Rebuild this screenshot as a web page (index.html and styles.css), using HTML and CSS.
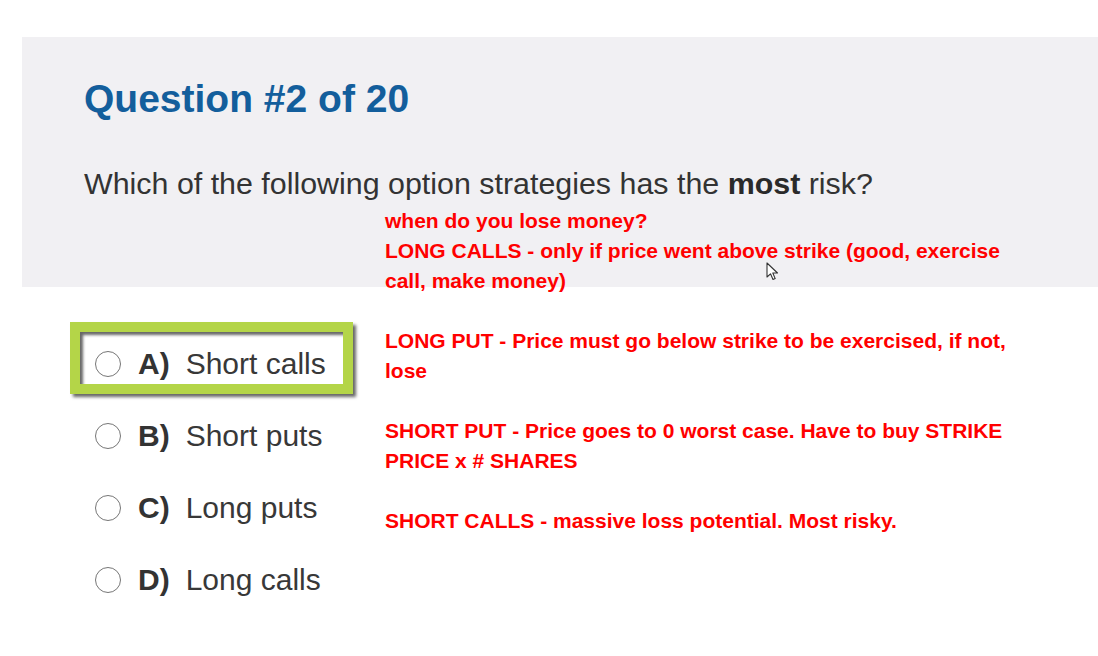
FILE: index.html
```html
<!DOCTYPE html>
<html>
<head>
<meta charset="utf-8">
<link rel="stylesheet" href="styles.css">
</head>
<body>
<div class="page">
  <section class="panel">
    <h1 class="title">Question #2 of 20</h1>
    <p class="question">Which of the following option strategies has the <b>most</b> risk?</p>
  </section>

  <ul class="options">
    <li class="option highlight"><span class="radio"></span><span class="letter">A)</span><span class="text">Short calls</span></li>
    <li class="option"><span class="radio"></span><span class="letter">B)</span><span class="text">Short puts</span></li>
    <li class="option"><span class="radio"></span><span class="letter">C)</span><span class="text">Long puts</span></li>
    <li class="option"><span class="radio"></span><span class="letter">D)</span><span class="text">Long calls</span></li>
  </ul>

  <div class="notes">
    <p>when do you lose money?<br>LONG CALLS - only if price went above strike (good, exercise call, make money)</p>
    <p>LONG PUT - Price must go below strike to be exercised, if not, lose</p>
    <p>SHORT PUT - Price goes to 0 worst case. Have to buy STRIKE PRICE x # SHARES</p>
    <p>SHORT CALLS - massive loss potential. Most risky.</p>
  </div>

  <svg class="cursor" width="13" height="20" viewBox="0 0 13 20">
    <path d="M1 1 L1 15 L4.5 11.8 L7 17.5 L9.2 16.6 L6.8 11 L11.5 11 Z" fill="#fff" stroke="#333" stroke-width="1.1" stroke-linejoin="round"/>
  </svg>
</div>
</body>
</html>
```

FILE: styles.css
```css
* { box-sizing: border-box; }
html, body { margin: 0; padding: 0; background: #ffffff; }
body { font-family: "Liberation Sans", Arial, sans-serif; }

.page {
  position: relative;
  width: 1098px;
  height: 656px;
  overflow: hidden;
}

.panel {
  margin: 37px 0 0 22px;
  height: 250px;
  background: #f1f0f3;
  padding: 40px 0 0 62px;
}

.title {
  margin: 0;
  font-size: 39px;
  line-height: 44px;
  font-weight: bold;
  color: #135e9c;
}

.question {
  margin: 44px 0 0 0;
  font-size: 30.4px;
  line-height: 36px;
  color: #333333;
}
.question b { color: #2a2a2a; }

.options {
  list-style: none;
  margin: 35px 0 0 70px;
  padding: 0;
  display: flex;
  flex-direction: column;
  align-items: flex-start;
}

.option {
  display: flex;
  align-items: center;
  height: 72px;
  border: 10px solid transparent;
  padding: 12px 17px 0 15px;
  font-size: 30px;
  color: #383838;
}
.option > * { line-height: 40px; }

.highlight {
  border-color: #b4d548;
  box-shadow: 3px 3px 3px rgba(0,0,0,0.6), inset 3px 3px 3px rgba(0,0,0,0.6);
}

.radio {
  display: inline-block;
  width: 26px;
  height: 26px;
  border: 1.6px solid #767676;
  border-radius: 50%;
  background: #fff;
  margin-right: 17px;
}

.letter {
  font-weight: bold;
  margin-right: 16px;
  color: #333;
}

.notes {
  position: absolute;
  left: 385px;
  top: 206px;
  width: 640px;
  color: #ff0000;
  font-weight: bold;
  font-size: 21px;
  line-height: 30px;
}
.notes p { margin: 0 0 30px 0; }

.cursor {
  position: absolute;
  left: 766px;
  top: 262px;
}
```
